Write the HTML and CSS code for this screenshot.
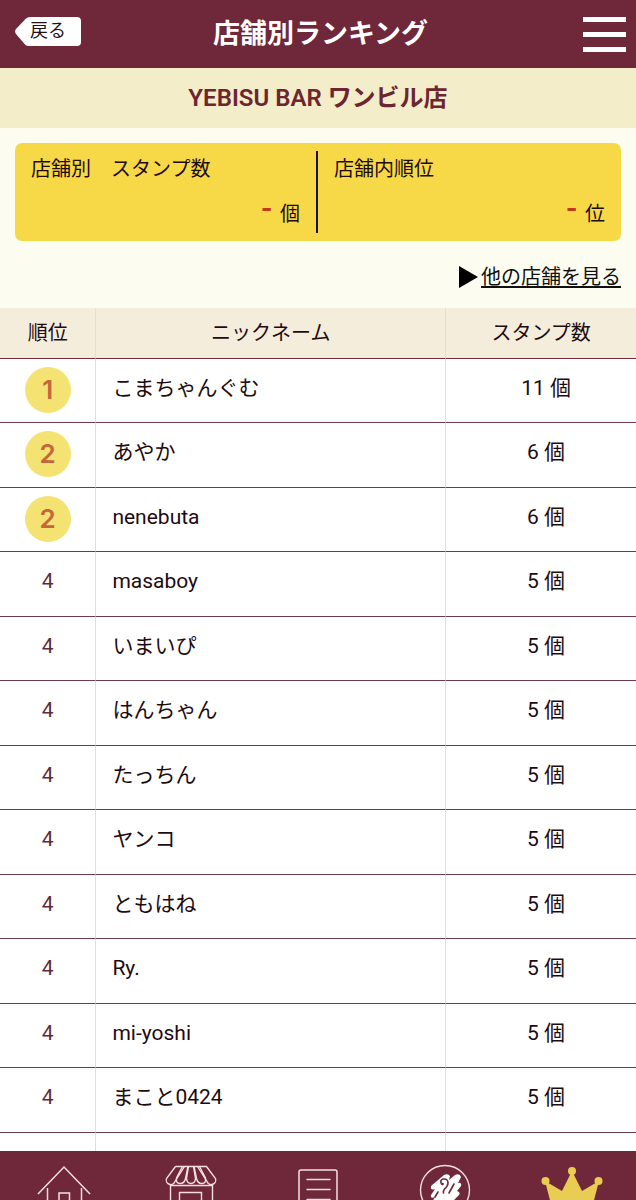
FILE: index.html
```html
<!DOCTYPE html>
<html lang="ja">
<head>
<meta charset="utf-8">
<meta name="viewport" content="width=device-width, initial-scale=1">
<title>店舗別ランキング</title>
<link rel="stylesheet" href="styles.css">
</head>
<body>
<div class="app">
  <header class="topbar">
    <a class="back" href="#">
      <svg class="back-shape" viewBox="0 0 66 29" aria-hidden="true"><path d="M11 1.500Q12.500 0 15 0H62Q66 0 66 4V25Q66 29 62 29H14Q11.500 29 10 27.500L1 17Q-.8 14.500 1 12Z" fill="#fff"/></svg>
      <span class="back-label">戻る</span>
    </a>
    <h1 class="title">店舗別ランキング</h1>
    <button class="menu" type="button" aria-label="メニュー"><span></span><span></span><span></span></button>
  </header>

  <main class="content">
    <h2 class="shop">YEBISU BAR ワンビル店</h2>

    <section class="summary">
      <div class="score">
        <div class="score-item">
          <p class="score-label">店舗別　スタンプ数</p>
          <p class="score-value"><strong>-</strong><span>個</span></p>
        </div>
        <div class="score-item">
          <p class="score-label">店舗内順位</p>
          <p class="score-value"><strong>-</strong><span>位</span></p>
        </div>
      </div>
      <p class="other">
        <svg class="arrow" viewBox="0 0 19 22" aria-hidden="true"><path d="M0 0L19 11L0 22Z"/></svg>
        <a href="#">他の店舗を見る</a>
      </p>
    </section>

    <table class="ranking">
      <thead>
        <tr><th class="col-rank" scope="col">順位</th><th class="col-name" scope="col">ニックネーム</th><th class="col-count" scope="col">スタンプ数</th></tr>
      </thead>
      <tbody>
        <tr><td class="medal"><span>1</span></td><td>こまちゃんぐむ</td><td>11 個</td></tr>
        <tr><td class="medal"><span>2</span></td><td>あやか</td><td>6 個</td></tr>
        <tr><td class="medal"><span>2</span></td><td>nenebuta</td><td>6 個</td></tr>
        <tr><td>4</td><td>masaboy</td><td>5 個</td></tr>
        <tr><td>4</td><td>いまいぴ</td><td>5 個</td></tr>
        <tr><td>4</td><td>はんちゃん</td><td>5 個</td></tr>
        <tr><td>4</td><td>たっちん</td><td>5 個</td></tr>
        <tr><td>4</td><td>ヤンコ</td><td>5 個</td></tr>
        <tr><td>4</td><td>ともはね</td><td>5 個</td></tr>
        <tr><td>4</td><td>Ry.</td><td>5 個</td></tr>
        <tr><td>4</td><td>mi-yoshi</td><td>5 個</td></tr>
        <tr><td>4</td><td>まこと0424</td><td>5 個</td></tr>
        <tr><td></td><td></td><td></td></tr>
      </tbody>
    </table>
  </main>

  <nav class="tabs">
    <a href="#" aria-label="ホーム">
      <svg viewBox="0 0 60 60"><g fill="none" stroke="#f6dfe2" stroke-width="1.500"><path d="M4 34L30 7L56 34"/><path d="M13.500 28V56H47.500V28"/><path d="M25 56V33H35.500V56"/></g></svg>
    </a>
    <a href="#" aria-label="店舗">
      <svg viewBox="0 0 60 60"><g fill="none" stroke="#f6dfe2" stroke-width="1.400"><path d="M14.500 6.500H45.500L54.500 18.500A4.500 4.500 0 0 1 46 21.500L36.500 6.500M14.500 6.500L5.500 18.500A4.500 4.500 0 0 0 14 21.500L23.500 6.500"/><path d="M21.500 6.500L15.500 18Q14.500 23.500 19 23.500Q23.500 23.500 24.500 18.500L27 6.500M27.500 6.500L25.500 18.500Q26 23.500 30 23.500Q34 23.500 34.500 18.500L32.500 6.500M33 6.500L35.500 18.500Q36.500 23.500 41 23.500Q45.500 23.500 44.500 18L38.500 6.500"/><path d="M9.500 56V25.500H51.500V56"/><path d="M18.500 56V32.500H40.500V56"/></g></svg>
    </a>
    <a href="#" aria-label="履歴">
      <svg viewBox="0 0 60 60"><g fill="none" stroke="#f6dfe2" stroke-width="1.500"><rect x="11" y="10" width="38" height="48" rx="2"/><path d="M19 19.500H42M19 29.500H42M19 39.500H42" stroke-linecap="round"/></g></svg>
    </a>
    <a href="#" aria-label="スタンプ">
      <svg viewBox="0 0 60 60"><circle cx="30" cy="30" r="24.500" fill="none" stroke="#f6dfe2" stroke-width="1.400"/><path d="M16 26L29 15Q33 13 35 16L34 20L40 15Q45 13 46 17L43 23Q47 22 46 26L42 31Q46 32 44 35L35 44H16L20 37Q15 39 16 35L20 29Q15 31 16 26Z" fill="#fff"/><path d="M26.500 24Q24.500 20 28 19Q33 18.500 33 23Q33 26 29.500 29Q28 31 28.500 33M39 24L34 33M23 32L20 37" fill="none" stroke="#6f2839" stroke-width="1.600" stroke-linecap="round"/><circle cx="27.500" cy="24" r="1.300" fill="#6f2839"/></svg>
    </a>
    <a href="#" aria-label="ランキング">
      <svg class="crown" viewBox="0 0 64 60"><g fill="#e9cc52"><circle cx="32" cy="11" r="4"/><circle cx="5.500" cy="21" r="4"/><circle cx="58.500" cy="21" r="4"/><path d="M5 21L22 31L32 11L42 31L59 21L52 48H12Z"/></g></svg>
    </a>
  </nav>
</div>
</body>
</html>
```

FILE: styles.css
```css
* { box-sizing: border-box; }

body {
  margin: 0;
  font-family: Roboto, "Noto Sans CJK JP", sans-serif;
  font-size: 21px;
  line-height: 26px;
  color: #1e0b10;
}

h1, h2, p { margin: 0; }

.app {
  display: flex;
  flex-direction: column;
  height: 100vh;
}

.topbar {
  display: grid;
  grid-template-columns: 1fr auto 1fr;
  align-items: center;
  flex: none;
  height: 68px;
  padding: 0 10px 0 15px;
  background: #6f2839;
}

.back {
  display: grid;
  justify-self: start;
  align-items: center;
  width: 66px;
  margin-bottom: 6px;
  color: #241016;
  font-size: 18px;
  line-height: 28px;
  text-decoration: none;
}
.back-shape, .back-label { grid-area: 1 / 1; }
.back-shape { width: 66px; height: 29px; }
.back-label { padding-left: 15px; }

.title {
  color: #fff;
  font-size: 27px;
  font-weight: 700;
  line-height: 36px;
}

.menu {
  display: flex;
  flex-direction: column;
  justify-self: end;
  gap: 10px;
  padding: 0;
  border: 0;
  background: none;
}
.menu span {
  width: 43px;
  height: 5px;
  background: #fff;
}

.content {
  flex: 1;
  min-height: 0;
  overflow-y: auto;
  scrollbar-width: none;
  background: #fff;
}

.shop {
  padding: 12px 0;
  background: #f3edca;
  color: #6c2630;
  font-size: 24px;
  font-weight: 600;
  line-height: 36px;
  text-align: center;
}

.summary {
  padding: 15px 15px 18px;
  background: #fcfcf0;
}

.score {
  display: grid;
  grid-template-columns: 1fr 1fr;
  padding: 8px 0;
  border-radius: 7px;
  background: #f7d948;
}
.score-item { padding: 5px 16px 3px; }
.score-item:first-child { border-right: 2px solid #1b1408; }
.score-label { font-size: 20px; }
.score-value {
  display: flex;
  justify-content: flex-end;
  align-items: flex-start;
  gap: 8px;
  margin-top: 16px;
  font-size: 20px;
  line-height: 32px;
}
.score-value strong {
  color: #c03a18;
  font-size: 32px;
  font-weight: 500;
  line-height: 20px;
}

.other {
  display: flex;
  justify-content: flex-end;
  align-items: center;
  gap: 3px;
  padding-top: 23px;
  font-size: 20px;
}
.other a { color: #101010; text-underline-offset: 2px; }
.arrow { width: 19px; height: 22px; }

.ranking {
  width: 100%;
  table-layout: fixed;
  border-collapse: separate;
  border-spacing: 0;
}
.col-rank { width: 15%; }
.col-count { width: 30%; }
.ranking th {
  height: 51px;
  padding: 0;
  background: #f4eddc;
  border-bottom: 1px solid #6f2839;
  font-size: 20px;
  font-weight: 400;
}
.ranking td {
  height: 64px;
  padding: 16px 16px 0;
  border-bottom: 1px solid #6a3d49;
  vertical-align: top;
}
.ranking tr:nth-child(even) td { height: 65px; }
.ranking th + th, .ranking td + td { border-left: 1px solid #e2dede; }
.ranking td:first-child { padding: 16px 0 0; color: #5e2b3a; text-align: center; }
.ranking td:last-child { padding: 16px 0 0 10px; text-align: center; }
.ranking .medal:first-child { padding-top: 8px; }
.medal span {
  display: block;
  width: 46px;
  margin: 0 auto;
  border-radius: 50%;
  background: #f4e373;
  color: #c4673a;
  font-family: Inter, sans-serif;
  font-size: 26px;
  font-weight: 600;
  line-height: 46px;
}

.tabs {
  display: grid;
  grid-template-columns: repeat(5, 1fr);
  justify-items: center;
  flex: none;
  height: 49px;
  overflow: hidden;
  background: #6f2839;
}
.tabs a { padding-top: 9px; }
.tabs svg { display: block; width: 60px; height: 60px; }
.tabs .crown { width: 64px; }
```
